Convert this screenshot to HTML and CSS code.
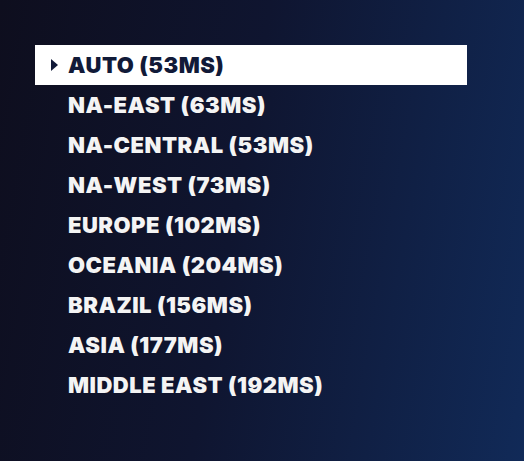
FILE: index.html
```html
<!DOCTYPE html>
<html>
<head>
<meta charset="utf-8">
<link rel="stylesheet" href="styles.css">
</head>
<body>
<div class="screen">
  <ul class="list">
    <li class="item selected"><span class="caret"></span>AUTO (53MS)</li>
    <li class="item">NA-EAST (63MS)</li>
    <li class="item">NA-CENTRAL (53MS)</li>
    <li class="item">NA-WEST (73MS)</li>
    <li class="item">EUROPE (102MS)</li>
    <li class="item">OCEANIA (204MS)</li>
    <li class="item">BRAZIL (156MS)</li>
    <li class="item">ASIA (177MS)</li>
    <li class="item">MIDDLE EAST (192MS)</li>
  </ul>
</div>
</body>
</html>
```
FILE: styles.css
```css
html, body {
  margin: 0;
  padding: 0;
}
.screen {
  width: 524px;
  height: 461px;
  background: linear-gradient(100deg, #0e0e1e 0%, #0f1530 45%, #112a58 100%);
  padding-top: 45px;
  padding-left: 35px;
  box-sizing: border-box;
  overflow: hidden;
}
.list {
  list-style: none;
  margin: 0;
  padding: 0;
  width: 432px;
}
.item {
  position: relative;
  height: 40px;
  display: flex;
  align-items: center;
  padding-left: 33px;
  font-family: "Inter", sans-serif;
  font-weight: 900;
  font-size: 22px;
  letter-spacing: 0.5px;
  color: #f4f4f4;
}
.item.selected {
  background: #ffffff;
  color: #111a38;
}
.caret {
  position: absolute;
  left: 16px;
  top: 14px;
  width: 0;
  height: 0;
  border-top: 6px solid transparent;
  border-bottom: 6px solid transparent;
  border-left: 7px solid #111a38;
}
```
